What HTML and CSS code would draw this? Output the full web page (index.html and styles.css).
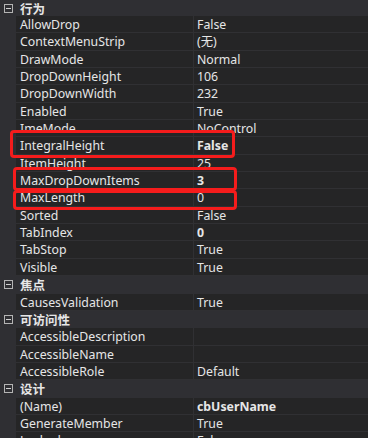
FILE: index.html
```html
<html>
<head>
  <title>Properties</title>
  <meta charset="utf-8">
  <link rel="stylesheet" href="styles.css">
</head>
<body>
  <div class="frame">
    <div class="sheet">
      <div class="cat first"><span class="toggle"></span><span class="cat-name">行为</span></div>
      <div class="row"><span class="name">AllowDrop</span><span class="val">False</span></div>
      <div class="row"><span class="name">ContextMenuStrip</span><span class="val">(无)</span></div>
      <div class="row"><span class="name">DrawMode</span><span class="val">Normal</span></div>
      <div class="row"><span class="name">DropDownHeight</span><span class="val">106</span></div>
      <div class="row"><span class="name">DropDownWidth</span><span class="val">232</span></div>
      <div class="row"><span class="name">Enabled</span><span class="val">True</span></div>
      <div class="row"><span class="name">ImeMode</span><span class="val">NoControl</span></div>
      <div class="row"><span class="name">IntegralHeight</span><span class="val bold">False</span></div>
      <div class="row"><span class="name">ItemHeight</span><span class="val">25</span></div>
      <div class="row"><span class="name">MaxDropDownItems</span><span class="val bold">3</span></div>
      <div class="row"><span class="name">MaxLength</span><span class="val">0</span></div>
      <div class="row"><span class="name">Sorted</span><span class="val">False</span></div>
      <div class="row"><span class="name">TabIndex</span><span class="val bold">0</span></div>
      <div class="row"><span class="name">TabStop</span><span class="val">True</span></div>
      <div class="row"><span class="name">Visible</span><span class="val">True</span></div>
      <div class="cat"><span class="toggle"></span><span class="cat-name">焦点</span></div>
      <div class="row"><span class="name">CausesValidation</span><span class="val">True</span></div>
      <div class="cat"><span class="toggle"></span><span class="cat-name">可访问性</span></div>
      <div class="row"><span class="name">AccessibleDescription</span><span class="val"></span></div>
      <div class="row"><span class="name">AccessibleName</span><span class="val"></span></div>
      <div class="row"><span class="name">AccessibleRole</span><span class="val">Default</span></div>
      <div class="cat"><span class="toggle"></span><span class="cat-name">设计</span></div>
      <div class="row"><span class="name">(Name)</span><span class="val bold">cbUserName</span></div>
      <div class="row"><span class="name">GenerateMember</span><span class="val">True</span></div>
      <div class="row"><span class="name">Locked</span><span class="val">False</span></div>
    </div>

    <div class="mark mark-1"></div>
    <div class="mark mark-2"></div>
    <div class="mark mark-3"></div>
  </div>
</body>
</html>
```

FILE: styles.css
```css
body {
  margin: 0;
  background-color: #2f2f33;
  color: #e6e6e6;
  font-family: "Noto Sans", "Noto Sans CJK SC", sans-serif;
  font-size: 12.3px;
}

.frame {
  position: relative;
  width: 368px;
  height: 438px;
  overflow: hidden;
}

.cat, .row {
  height: 17.35px;
  box-sizing: border-box;
}

.cat {
  display: flex;
  align-items: center;
  background-color: #2f2f33;
}
.cat.first {
  height: 16px;
}

.toggle {
  position: relative;
  width: 9px;
  height: 9px;
  margin-left: 4px;
  border: 1px solid #b4b4b4;
  box-sizing: border-box;
}
.toggle::after {
  content: "";
  position: absolute;
  left: 1px;
  right: 1px;
  top: 3px;
  height: 1px;
  background-color: #d0d0d0;
}

.cat-name {
  margin-left: 7px;
  font-family: "Noto Sans CJK SC", sans-serif;
  font-weight: bold;
  font-size: 12.5px;
  line-height: 15px;
}

.row {
  display: grid;
  grid-template-columns: 178px 1fr;
  margin-left: 16px;
  background-color: #252526;
  border-bottom: 1px solid #303033;
  line-height: 17px;
}

.name {
  padding-left: 4px;
  border-right: 1px solid #303033;
  white-space: nowrap;
  overflow: hidden;
}

.val {
  padding-left: 3px;
  white-space: nowrap;
}

.bold {
  font-weight: bold;
}

.mark {
  position: absolute;
  border: 3.5px solid #f51c1c;
  border-radius: 4px;
  box-sizing: border-box;
}
.mark-1 {
  left: 10px;
  top: 130px;
  width: 225px;
  height: 28px;
}
.mark-2 {
  left: 13px;
  top: 167px;
  width: 224px;
  height: 24px;
}
.mark-3 {
  left: 13px;
  top: 190px;
  width: 224px;
  height: 20px;
}
```
